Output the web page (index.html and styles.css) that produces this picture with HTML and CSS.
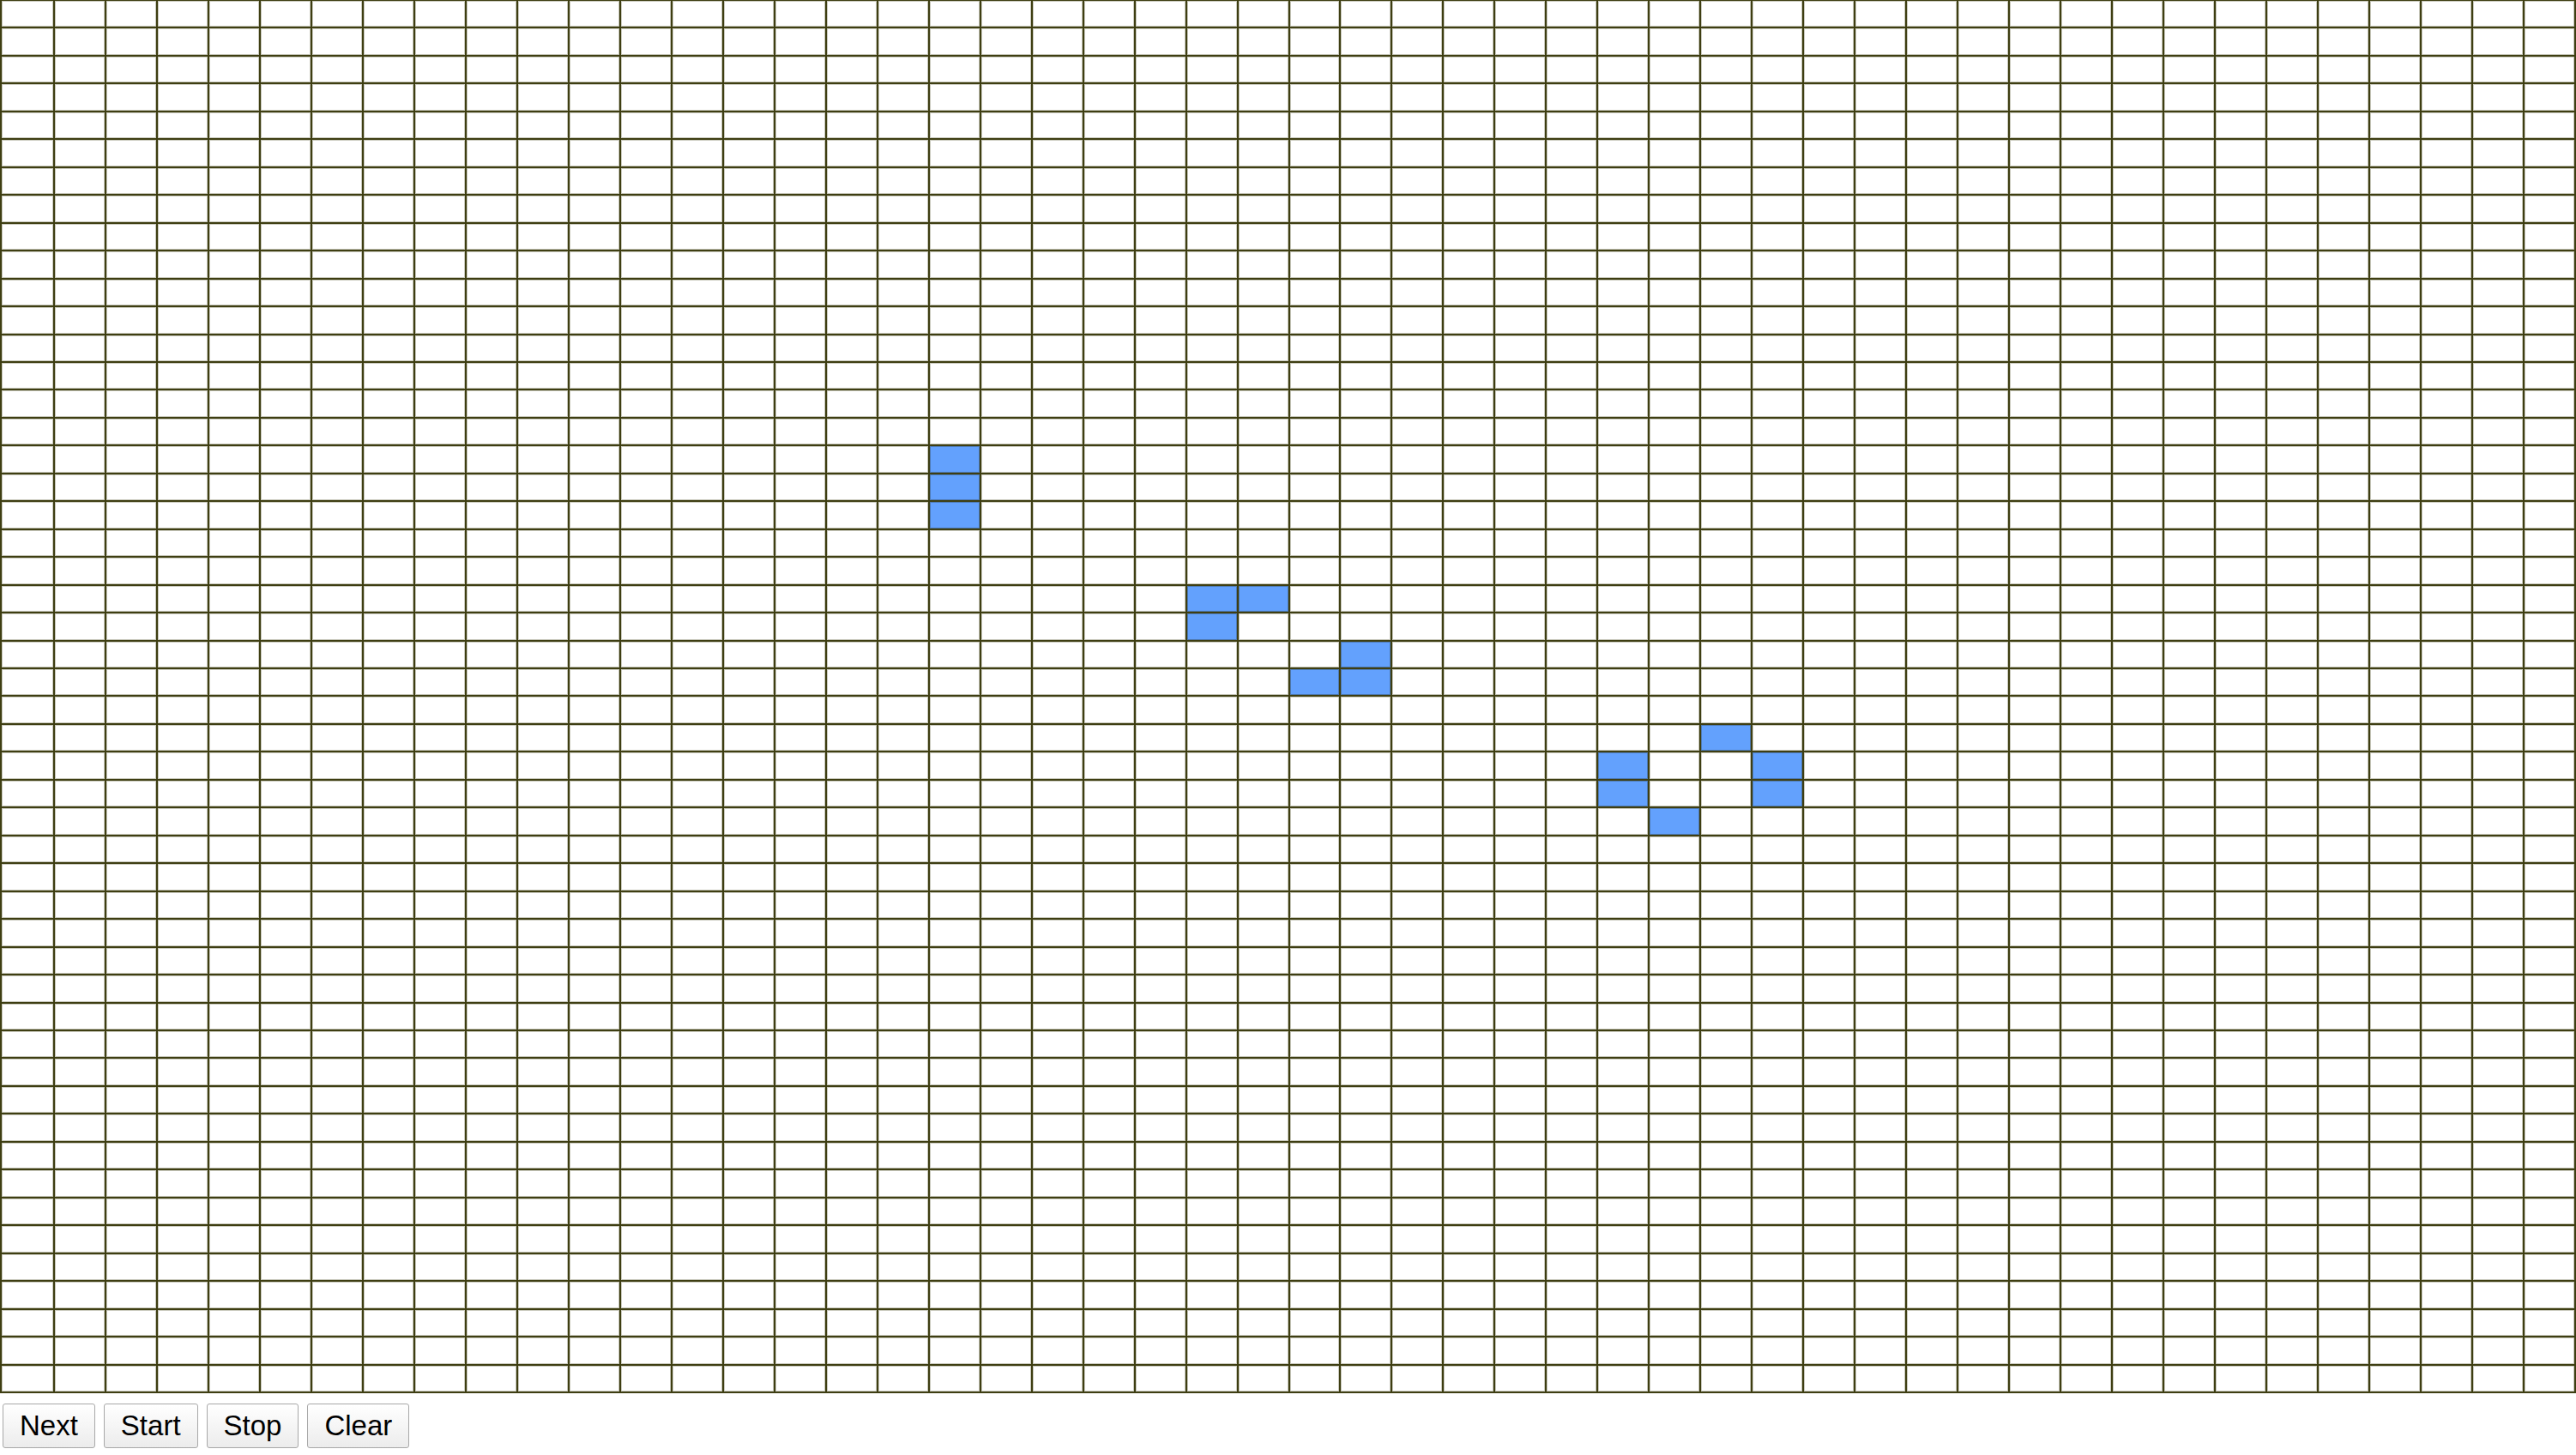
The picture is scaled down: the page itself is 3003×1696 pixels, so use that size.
FILE: index.html
```html
<!DOCTYPE html>
<html>
<head>
    <title>Game of Life</title>
    <link rel="stylesheet" href="styles.css">
</head>

<body>
    <div id="board" class="board"></div>
    <div class="controls">
        <button id="next">Next</button>
        <button id="start">Start</button>
        <button id="stop">Stop</button>
        <button id="clear">Clear</button>
    </div>

    <script>
        const ROWS = 50;
        const COLS = 50;
        const board = document.getElementById('board');
        let cells = [];
        let timer = null;

        // starting pattern: blinker, two blocks of a beacon-ish shape, and a beehive
        const seed = [
            [16, 18], [17, 18], [18, 18],
            [21, 23], [21, 24], [22, 23], [23, 26], [24, 25], [24, 26],
            [26, 33], [27, 31], [27, 34], [28, 31], [28, 34], [29, 32]
        ];

        for (let r = 0; r < ROWS; r++) {
            const row = [];
            for (let c = 0; c < COLS; c++) {
                const cell = document.createElement('div');
                cell.className = 'cell';
                cell.addEventListener('click', function() {
                    cell.classList.toggle('alive');
                });
                board.appendChild(cell);
                row.push(cell);
            }
            cells.push(row);
        }

        seed.forEach(function(p) {
            cells[p[0]][p[1]].classList.add('alive');
        });

        function isAlive(r, c) {
            if (r < 0 || c < 0 || r >= ROWS || c >= COLS) return 0;
            return cells[r][c].classList.contains('alive') ? 1 : 0;
        }

        function step() {
            const next = [];
            for (let r = 0; r < ROWS; r++) {
                next.push([]);
                for (let c = 0; c < COLS; c++) {
                    let n = 0;
                    for (let dr = -1; dr <= 1; dr++) {
                        for (let dc = -1; dc <= 1; dc++) {
                            if (dr || dc) n += isAlive(r + dr, c + dc);
                        }
                    }
                    next[r].push(n === 3 || (n === 2 && isAlive(r, c)));
                }
            }
            for (let r = 0; r < ROWS; r++) {
                for (let c = 0; c < COLS; c++) {
                    cells[r][c].classList.toggle('alive', next[r][c]);
                }
            }
        }

        document.getElementById('next').addEventListener('click', step);
        document.getElementById('start').addEventListener('click', function() {
            if (!timer) timer = setInterval(step, 200);
        });
        document.getElementById('stop').addEventListener('click', function() {
            clearInterval(timer);
            timer = null;
        });
        document.getElementById('clear').addEventListener('click', function() {
            cells.forEach(function(row) {
                row.forEach(function(cell) { cell.classList.remove('alive'); });
            });
        });
    </script>
</body>
</html>
```

FILE: styles.css
```css
body {
    margin: 0;
    background-color: #ffffff;
    font-family: "Liberation Sans", Arial, sans-serif;
}

/* Board */
.board {
    display: grid;
    grid-template-columns: 60px repeat(49, 1fr);
    grid-template-rows: repeat(50, 1fr);
    gap: 2px;
    width: 100%;
    height: 1624px;
    padding: 1px 2px 2px 2px;
    box-sizing: border-box;
    background-color: #3e3e12;
}

.cell {
    background-color: #ffffff;
    box-shadow: inset 0 0 0 1px rgba(62, 62, 18, 0.28);
}

.cell.alive {
    background-color: #63a1fd;
    box-shadow: inset 0 0 0 1px rgba(40, 50, 40, 0.35);
}

/* Buttons */
.controls {
    display: flex;
    gap: 10px;
    margin-top: 12px;
    padding-left: 3px;
}

button {
    font-family: "Liberation Sans", Arial, sans-serif;
    font-size: 33px;
    line-height: 38px;
    padding: 6px 19px;
    color: #000000;
    background: linear-gradient(#ffffff, #ececec);
    border: 1px solid #a8a8a8;
    border-radius: 3px;
    cursor: pointer;
}

button:hover {
    background: linear-gradient(#f8f8f8, #e0e0e0);
}
```
